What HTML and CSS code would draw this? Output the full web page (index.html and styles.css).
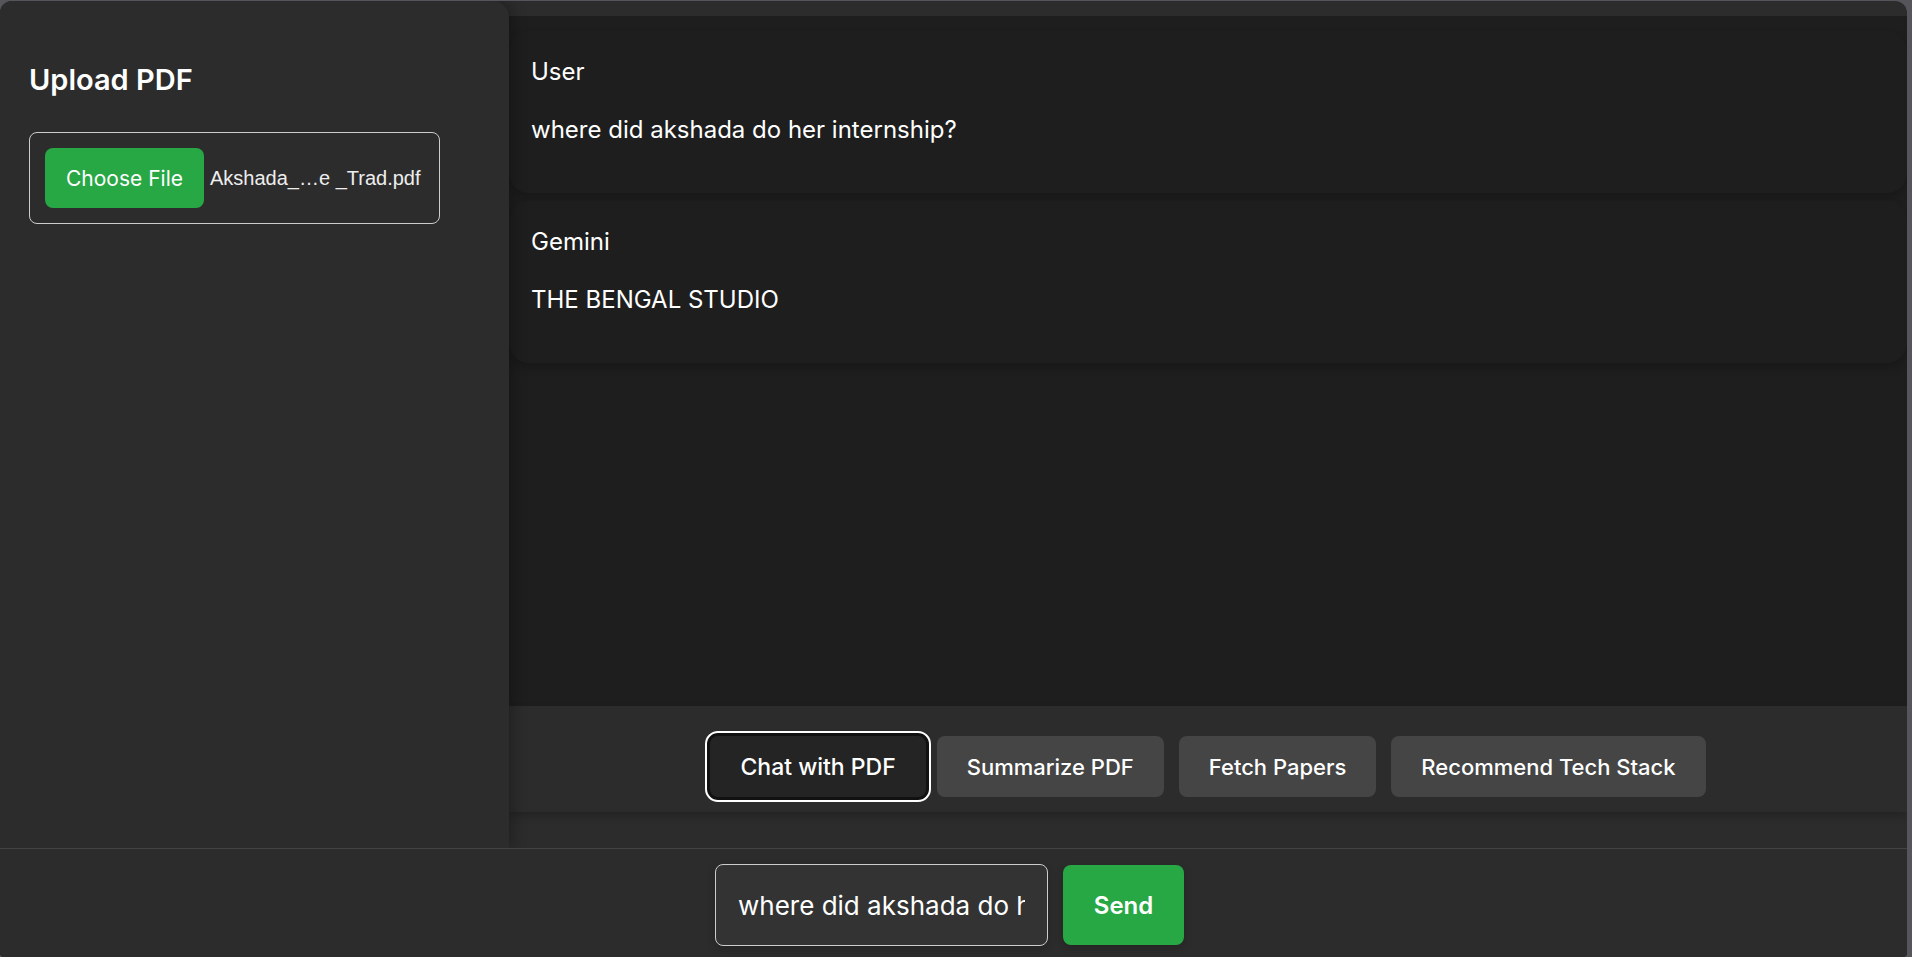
FILE: index.html
```html
<!DOCTYPE html>
<html lang="en">
<head>
<meta charset="utf-8">
<title>Chat with PDF</title>
<link rel="stylesheet" href="styles.css">
</head>
<body>
<div class="app">
  <div class="workspace">
    <aside class="sidebar">
      <h2 class="sidebar-title">Upload PDF</h2>
      <div class="file-picker">
        <button type="button" class="file-button" aria-describedby="file-name">Choose File</button>
        <span class="file-name" id="file-name">Akshada_…e _Trad.pdf</span>
      </div>
    </aside>
    <main class="content">
      <section class="chat">
        <article class="message">
          <p class="message-text">User</p>
          <p class="message-text">where did akshada do her internship?</p>
        </article>
        <article class="message">
          <p class="message-text">Gemini</p>
          <p class="message-text">THE BENGAL STUDIO</p>
        </article>
      </section>
      <nav class="actions">
        <button type="button" class="action action-active">Chat with PDF</button>
        <button type="button" class="action">Summarize PDF</button>
        <button type="button" class="action">Fetch Papers</button>
        <button type="button" class="action">Recommend Tech Stack</button>
      </nav>
    </main>
  </div>
  <form class="composer">
    <input class="prompt" type="text" aria-label="Question" value="where did akshada do her internship?">
    <button type="button" class="send">Send</button>
  </form>
</div>
</body>
</html>
```
FILE: styles.css
```css
* {
  box-sizing: border-box;
}

body {
  margin: 0;
  padding: 1px 5px 0 0;
  height: 100vh;
  overflow: hidden;
  background: #55555b;
  color: #fff;
  font-family: Inter, "Open Sans", sans-serif;
  font-size: 24px;
}

button,
input {
  font-family: inherit;
  color: inherit;
}

.app {
  display: flex;
  flex-direction: column;
  height: 100%;
  overflow: hidden;
  border-radius: 12px 12px 4px 4px;
  background: #2c2c2c;
}

.workspace {
  display: flex;
  flex: 1;
  min-height: 0;
}

.sidebar {
  position: relative;
  z-index: 1;
  flex: 0 0 509px;
  padding: 58px 28px 0 29px;
  border-radius: 0 16px 0 0;
  background: #2c2c2c;
  box-shadow: 3px 0 15px rgba(0, 0, 0, 0.3);
}

.sidebar-title {
  margin: 0 0 31px;
  font-size: 29px;
  line-height: 42px;
  font-weight: 600;
}

.file-picker {
  display: inline-flex;
  align-items: center;
  gap: 6px;
  width: 411px;
  padding: 15px;
  border: 1px solid #ccc;
  border-radius: 8px;
}

.file-button {
  flex: none;
  width: 159px;
  height: 60px;
  padding: 0;
  border: 0;
  border-radius: 8px;
  background: #28a745;
  font-size: 21px;
}

.file-name {
  font-family: "Liberation Sans", Arial, sans-serif;
  font-size: 20px;
  white-space: nowrap;
  color: #eee;
}

.content {
  display: flex;
  flex: 1;
  flex-direction: column;
  min-width: 0;
  padding: 15px 0 36px;
}

.chat {
  flex: 1;
  min-height: 0;
  overflow: hidden;
  padding-top: 15px;
  background: #1e1e1e;
}

.message {
  margin-bottom: 8px;
  padding: 23px 22px 45px;
  border-radius: 20px;
  background: #1e1e1e;
  box-shadow: 0 5px 10px rgba(0, 0, 0, 0.2);
}

.message-text {
  margin: 0;
  line-height: 36px;
}

.message-text + .message-text {
  margin-top: 22px;
}

.actions {
  display: flex;
  justify-content: center;
  gap: 15px;
  padding: 30px 0 15px;
  box-shadow: 0 4px 8px rgba(0, 0, 0, 0.2);
}

.action {
  height: 61px;
  padding: 0 30px;
  border: 0;
  border-radius: 8px;
  background: #454545;
  font-size: 22px;
  font-weight: 500;
}

.action-active {
  margin-right: -4px;
  background: #242424;
  box-shadow: 0 0 0 3px #111;
  font-size: 23px;
  outline: 2px solid #fff;
  outline-offset: 3px;
}

.composer {
  position: relative;
  z-index: 2;
  display: flex;
  justify-content: center;
  align-items: center;
  gap: 15px;
  padding: 15px 8px 11px 0;
  border-top: 1px solid #444;
  background: #2c2c2c;
}

.prompt {
  width: 333px;
  height: 82px;
  padding: 0 22px;
  border: 1px solid #ccc;
  border-radius: 8px;
  background: #333;
  box-shadow: 0 3px 8px rgba(0, 0, 0, 0.2);
  font-size: 26px;
}

.send {
  width: 121px;
  height: 80px;
  border: 0;
  border-radius: 8px;
  background: #28a745;
  box-shadow: 0 3px 8px rgba(0, 0, 0, 0.2);
  font-size: 24px;
  font-weight: 600;
}
```
